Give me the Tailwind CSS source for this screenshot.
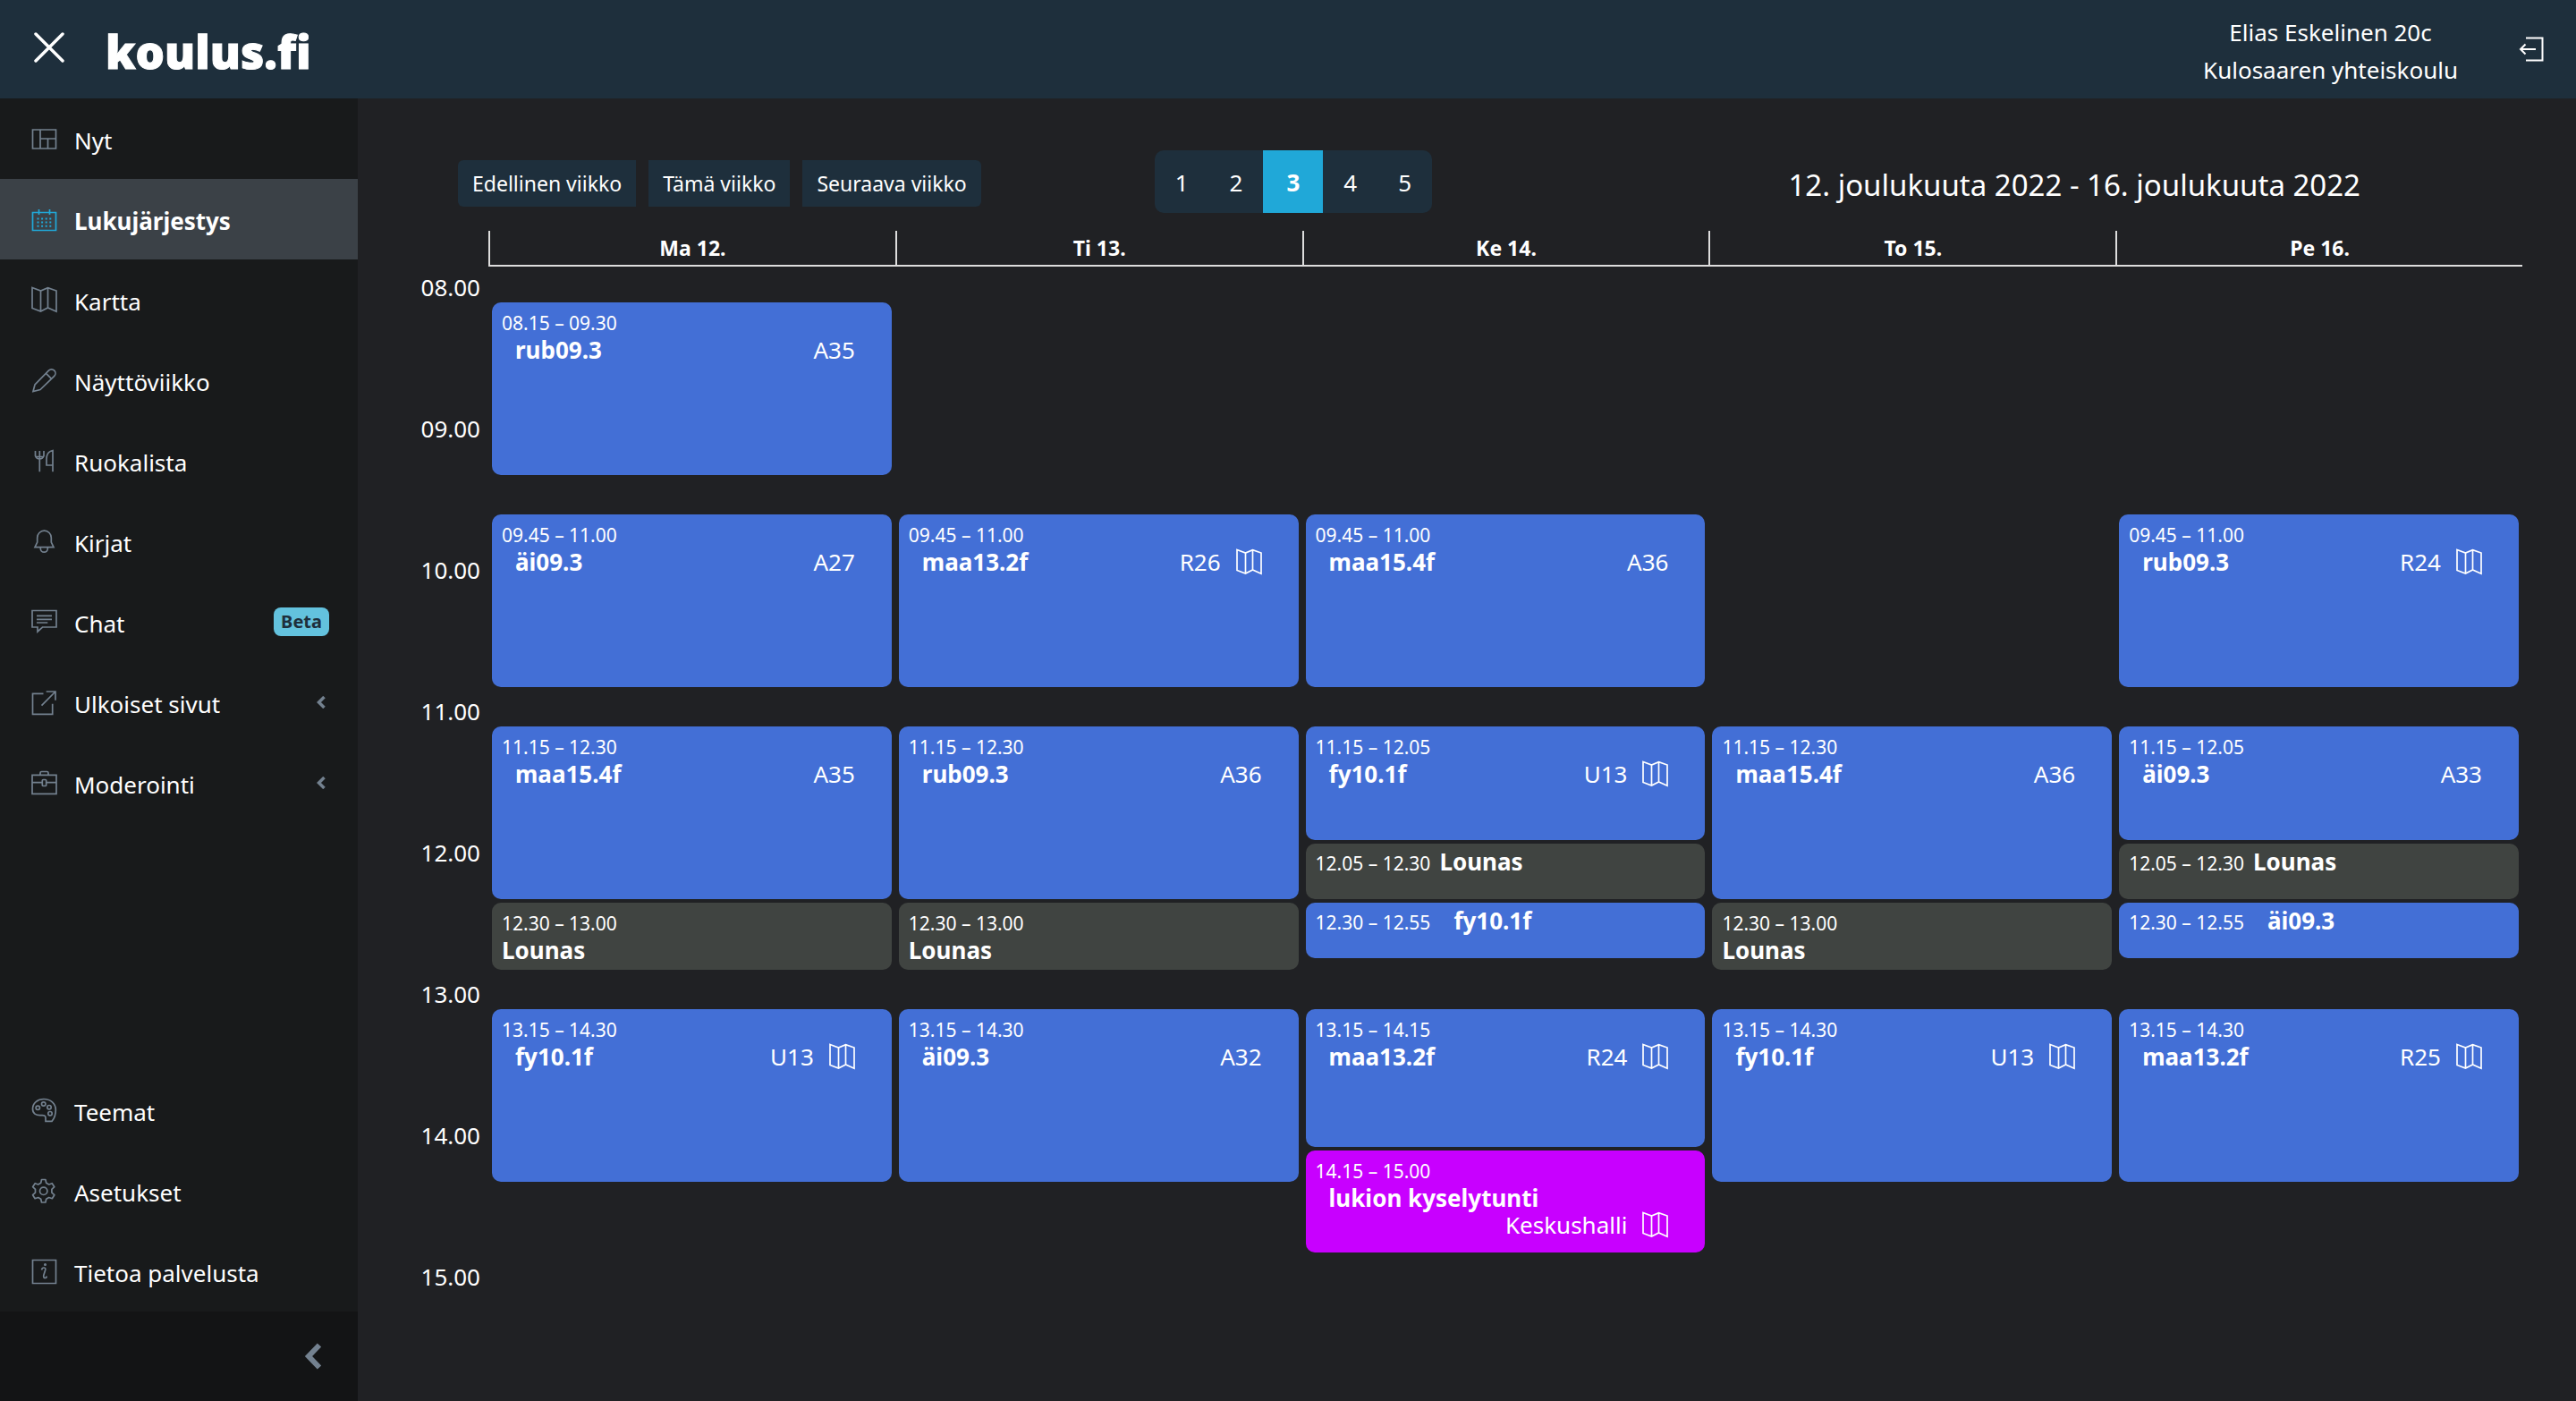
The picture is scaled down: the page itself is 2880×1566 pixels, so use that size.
<!DOCTYPE html>
<html lang="fi">
<head>
    <meta charset="UTF-8">
    <meta name="viewport" content="width=device-width, initial-scale=1.0">
    <title>Lukujärjestys - koulus.fi</title>
    <script src="https://cdn.jsdelivr.net/npm/@tailwindcss/browser@4"></script>
</head>
<body class="flex min-h-screen flex-col bg-[#202124] font-['Noto_Sans',sans-serif] text-[26px] text-white">

<header class="flex h-[110px] items-center bg-[#1e2f3c]">
    <button type="button" aria-label="Sulje valikko" class="ml-[34px] p-1 pb-2">
        <svg class="size-[34px]" viewBox="0 0 34 34" fill="none" stroke="currentColor" stroke-width="3.500" stroke-linecap="round"><path d="M2 2 32 32M32 2 2 32"/></svg>
    </button>
    <a href="#" class="ml-[42px] pt-1 text-[51px] leading-none font-black [-webkit-text-stroke:1px_white]">koulus.fi</a>
    <div class="ml-auto pt-1 text-center leading-[42px]">
        <div>Elias Eskelinen 20c</div>
        <div>Kulosaaren yhteiskoulu</div>
    </div>
    <a href="#" aria-label="Kirjaudu ulos" class="mr-[35px] ml-[67px]">
        <svg class="size-[30px]" viewBox="0 0 30 30" fill="none" stroke="currentColor" stroke-width="2"><path d="M9 2.500H27.500V27.500H9M20 15H3M8.500 9.500 3 15l5.500 5.500"/></svg>
    </a>
</header>

<div class="flex flex-1">
    <!-- Sidebar -->
    <aside class="flex w-[400px] shrink-0 flex-col bg-[#181a1b]">
        <nav id="mainNav"></nav>
        <nav id="bottomNav" class="mt-auto"></nav>
        <div class="flex h-[100px] items-center justify-end bg-[#131415] pr-10">
            <button type="button" aria-label="Pienennä valikko" class="text-[#73818f]">
                <svg class="h-[30px] w-5" viewBox="0 0 20 30" fill="none" stroke="currentColor" stroke-width="6"><path d="M17 2.500 5 15 17 27.500"/></svg>
            </button>
        </div>
    </aside>

    <!-- Timetable -->
    <main class="min-w-0 flex-1 px-[60px] pt-[58px]">
        <div class="flex h-[70px] items-center pl-[52px]">
            <div class="flex gap-[14px] pt-1 text-[23px] leading-[52px]">
                <button type="button" class="rounded-l-md bg-[#1e2f3c] px-4">Edellinen viikko</button>
                <button type="button" class="bg-[#1e2f3c] px-4">Tämä viikko</button>
                <button type="button" class="rounded-r-md bg-[#1e2f3c] px-4">Seuraava viikko</button>
            </div>
            <div class="ml-[194px] flex overflow-hidden rounded-[10px] bg-[#1e2f3c] leading-[72px]">
                <button type="button" class="h-[70px] px-[23px]">1</button>
                <button type="button" class="h-[70px] px-[23px]">2</button>
                <button type="button" class="h-[70px] bg-[#20a8d8] px-[26px] font-bold">3</button>
                <button type="button" class="h-[70px] px-[23px]">4</button>
                <button type="button" class="h-[70px] px-[23px]">5</button>
            </div>
            <h1 class="mr-[181px] ml-auto pt-2 text-[33px] leading-[62px]">12. joulukuuta 2022 - 16. joulukuuta 2022</h1>
        </div>

        <div id="days" class="mt-5 ml-[86px] grid grid-cols-5 border-b-2 border-[#dddddd]"></div>

        <div class="grid h-[1264px] grid-cols-[86px_repeat(5,minmax(0,1fr))]">
            <div id="hours" class="grid grid-rows-8 pr-[9px] text-right leading-[46px]"></div>
        </div>
    </main>
</div>

<script>
    const icons = {
        now: '<path d="M2.500 5H28.500V26H2.500ZM11 5V26M11 15H28.500M19.500 15V26"/>',
        calendar: '<path d="M2.500 7.500H28.500V27.500H2.500ZM9.500 4v6M21.500 4v6"/><path stroke-width="2" stroke-dasharray="2 2.600" d="M7.500 14.500H24M7.500 18.500H24M7.500 22.700H24"/>',
        map: '<path d="M2 1.500 11.500 5 19.500 1.700 29 5V28.300L19.500 24 11.500 28 2 24.500ZM11.500 5V28M19.500 1.700V24"/>',
        pencil: '<path d="M3 27.500 5 20 20.500 4.200a4.300 4.300 0 0 1 6.200 6.200L11 25.500ZM17.500 7.300l6 6"/>',
        food: '<path d="M5.500 4v5.500a5 5 0 0 0 9.500 0V4M10.300 4v10.500M5.500 10.500H15M10.300 14.500V27.300M25 27.300V3.500C20 4.500 18 8 18 13v7H25"/>',
        bell: '<path d="M7.700 16V11a7.500 7.500 0 0 1 15.600 0v5L26 21.700H5ZM11.300 21.700v1.500a4 4 0 0 0 8 0v-1.500"/>',
        chat: '<path d="M2 2.500H29V21H13.500L8 26V21H2ZM7 8.300H24M7 12.300H24M7 16H19.300"/>',
        external: '<path d="M14.500 5.300H2.500V28.300H24.700V16.700M17.700 3H28V12.700M28 3 12.500 18.700"/>',
        briefcase: '<path d="M2 6.300H29V27.300H2ZM11 6V4q0-1.500 1.500-1.500h6Q20 2.500 20 4v2M2 14.700H13.300M17.700 14.700H29"/><rect x="13.300" y="11.500" width="4.400" height="7" rx="1"/>',
        palette: '<path d="M15 2.500C22.500 2.500 28.300 7.500 28.300 14.500 28.300 19 27 24 24 27.400H17V23.500C17 21 15 20.300 12 20.600 6 21 2.500 18.500 2.500 13.500 2.500 7 8 2.500 15 2.500Z"/><circle cx="8.300" cy="12.300" r="2.200"/><circle cx="14.700" cy="8" r="2.200"/><circle cx="21" cy="11.700" r="2.200"/><circle cx="22" cy="18.700" r="2.200"/>',
        gear: '<path stroke-linejoin="round" d="M12.500 2.500h4.400l.8 3.800 3 1.700 3.500-1.300 2.600 4-2.900 2.700v3.700l2.900 2.600-2.500 4-3.600-1.200-3 1.700-.8 3.800h-4.400l-.8-3.800-3-1.700-3.600 1.200-2.500-4 2.900-2.600v-3.700l-2.900-2.700 2.600-4 3.500 1.300 3-1.700Z"/><circle cx="14.700" cy="15.300" r="4.200"/>',
        info: '<path d="M2.500 2.500H28.500V28.500H2.500ZM12.500 13.500Q13 11 15 11 17.300 11 16.700 13.500L14.800 19.500Q14.300 22.500 16.500 22.500 18 22.500 18.300 20.500"/><circle cx="16.500" cy="7.500" r=".7"/>'
    };

    const icon = (name, cls) => `<svg class="${cls}" viewBox="0 0 30 30" fill="none" stroke="currentColor" stroke-width="1.700">${icons[name]}</svg>`;
    const chevron = '<svg class="mr-1 ml-auto h-[14px] w-[10px] text-[#73818f]" viewBox="0 0 10 14" fill="none" stroke="currentColor" stroke-width="3.500"><path d="M8.500 1 2.500 7l6 6"/></svg>';
    const beta = '<span class="ml-auto rounded-lg bg-[#63c2de] px-2 text-[20px] leading-8 font-bold text-[#1e2f3c]">Beta</span>';

    function navItem([name, text, extra = '', active = false]) {
        return `<a href="#" class="flex h-[90px] items-center gap-[19px] pr-8 pl-[34px] ${active ? 'bg-[#3b4147] font-bold' : ''}">
            ${icon(name, active ? 'size-[30px] text-[#20a8d8]' : 'size-[30px] text-[#73818f]')}<span class="pt-1">${text}</span>${extra}</a>`;
    }

    document.getElementById('mainNav').innerHTML = [
        ['now', 'Nyt'],
        ['calendar', 'Lukujärjestys', '', true],
        ['map', 'Kartta'],
        ['pencil', 'Näyttöviikko'],
        ['food', 'Ruokalista'],
        ['bell', 'Kirjat'],
        ['chat', 'Chat', beta],
        ['external', 'Ulkoiset sivut', chevron],
        ['briefcase', 'Moderointi', chevron]
    ].map(navItem).join('');

    document.getElementById('bottomNav').innerHTML = [
        ['palette', 'Teemat'],
        ['gear', 'Asetukset'],
        ['info', 'Tietoa palvelusta']
    ].map(navItem).join('');

    // start, end, title, room, has map link
    const week = [
        { day: 'Ma 12.', events: [
            ['08.15', '09.30', 'rub09.3', 'A35'],
            ['09.45', '11.00', 'äi09.3', 'A27'],
            ['11.15', '12.30', 'maa15.4f', 'A35'],
            ['12.30', '13.00', 'Lounas'],
            ['13.15', '14.30', 'fy10.1f', 'U13', true]
        ] },
        { day: 'Ti 13.', events: [
            ['09.45', '11.00', 'maa13.2f', 'R26', true],
            ['11.15', '12.30', 'rub09.3', 'A36'],
            ['12.30', '13.00', 'Lounas'],
            ['13.15', '14.30', 'äi09.3', 'A32']
        ] },
        { day: 'Ke 14.', events: [
            ['09.45', '11.00', 'maa15.4f', 'A36'],
            ['11.15', '12.05', 'fy10.1f', 'U13', true],
            ['12.05', '12.30', 'Lounas'],
            ['12.30', '12.55', 'fy10.1f'],
            ['13.15', '14.15', 'maa13.2f', 'R24', true],
            ['14.15', '15.00', 'lukion kyselytunti', 'Keskushalli', true]
        ] },
        { day: 'To 15.', events: [
            ['11.15', '12.30', 'maa15.4f', 'A36'],
            ['12.30', '13.00', 'Lounas'],
            ['13.15', '14.30', 'fy10.1f', 'U13', true]
        ] },
        { day: 'Pe 16.', events: [
            ['09.45', '11.00', 'rub09.3', 'R24', true],
            ['11.15', '12.05', 'äi09.3', 'A33'],
            ['12.05', '12.30', 'Lounas'],
            ['12.30', '12.55', 'äi09.3'],
            ['13.15', '14.30', 'maa13.2f', 'R25', true]
        ] }
    ];

    // grid rows are five minutes each, counted from 08.00
    function row(time) {
        const [h, m] = time.split('.').map(Number);
        return (h - 8) * 12 + m / 5 + 1;
    }

    function eventCard([start, end, title, room, hasMap]) {
        const from = row(start), to = row(end);
        const lunch = title === 'Lounas';
        const short = to - from < 6;
        const color = lunch ? 'bg-[#404441]' : room === 'Keskushalli' ? 'bg-[#c800ff]' : 'bg-[#436fd6]';
        const time = `<div class="text-[21px]">${start} – ${end}</div>`;
        let body;
        if (short || lunch) {
            body = `<h3 class="font-bold ${short ? (lunch ? 'ml-[10px]' : 'ml-[26px]') : ''}">${title}</h3>`;
        } else {
            const long = room.length > 3;
            body = `<div class="flex justify-between pr-[41px] pl-[15px] ${long ? 'flex-wrap' : ''}">
                <h3 class="font-bold ${long ? 'w-full' : ''}">${title}</h3>
                <div class="ml-auto flex items-center gap-4">${room}${hasMap ? `<a href="#" aria-label="Näytä kartalla">${icon('map', 'size-[30px]')}</a>` : ''}</div>
            </div>`;
        }
        return `<article class="mx-1 mb-1 overflow-hidden rounded-[10px] pl-[11px] leading-[30px] ${short ? 'flex items-baseline pt-[5px]' : 'pt-2'} ${color}" style="grid-row: ${from} / ${to}">${time}${body}</article>`;
    }

    const days = document.getElementById('days');
    const hours = document.getElementById('hours');
    week.forEach(({ day, events }) => {
        days.innerHTML += `<h2 class="border-l-2 border-[#dddddd] pt-px text-center text-[23px] leading-[37px] font-bold">${day}</h2>`;
        hours.parentElement.insertAdjacentHTML('beforeend', `<section class="grid grid-rows-[repeat(96,minmax(0,1fr))]">${events.map(eventCard).join('')}</section>`);
    });
    for (let h = 8; h < 16; h++) {
        hours.innerHTML += `<div>${String(h).padStart(2, '0')}.00</div>`;
    }
</script>

</body>
</html>
